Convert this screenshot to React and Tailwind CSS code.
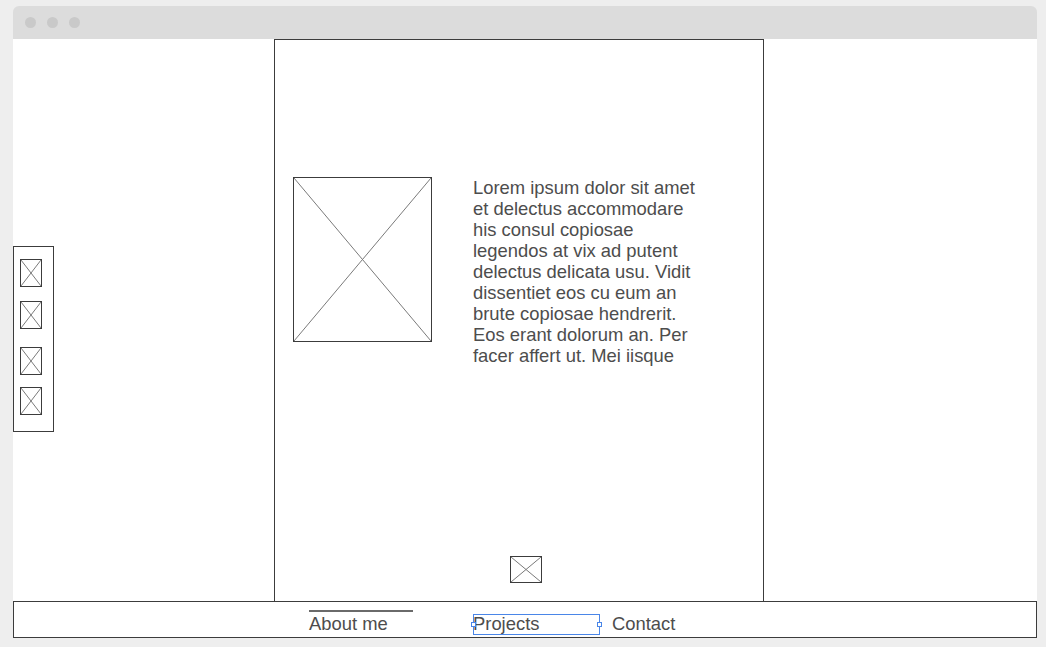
function Placeholder({ className }) {
  return (
    <div className={`border border-[#3c3c3c] bg-white ${className}`}>
      <svg className="block w-full h-full" viewBox="0 0 100 100" preserveAspectRatio="none">
        <line x1="0" y1="0" x2="100" y2="100" stroke="#7a7a7a" strokeWidth="1" vectorEffect="non-scaling-stroke" />
        <line x1="100" y1="0" x2="0" y2="100" stroke="#7a7a7a" strokeWidth="1" vectorEffect="non-scaling-stroke" />
      </svg>
    </div>
  );
}

export default function App() {
  return (
    <div
      className="w-[1046px] h-[647px] bg-[#eeeeee] pt-[6px] pl-[13px] overflow-hidden text-[#4d4d4d]"
      style={{ fontFamily: '"Liberation Sans", Arial, sans-serif' }}
    >
      <div className="w-[1024px] flex flex-col">
        {/* Title bar */}
        <div className="h-[33px] bg-[#dcdcdc] rounded-t-[6px] flex items-center gap-[11px] pl-[12px]">
          <span className="w-[11px] h-[11px] rounded-full bg-[#c9c9c9]" />
          <span className="w-[11px] h-[11px] rounded-full bg-[#c9c9c9]" />
          <span className="w-[11px] h-[11px] rounded-full bg-[#c9c9c9]" />
        </div>

        {/* Content */}
        <div className="h-[562px] bg-white flex items-start">
          {/* Sidebar */}
          <div className="mt-[207px] w-[41px] h-[186px] border border-[#3c3c3c] flex flex-col pl-[6px]">
            <Placeholder className="w-[22px] h-[28px] mt-[12px]" />
            <Placeholder className="w-[22px] h-[28px] mt-[14px]" />
            <Placeholder className="w-[22px] h-[28px] mt-[18px]" />
            <Placeholder className="w-[22px] h-[28px] mt-[12px]" />
          </div>

          {/* Center column */}
          <div className="ml-[220px] w-[490px] h-[562px] border-t border-l border-r border-[#3c3c3c] flex flex-col">
            <div className="flex items-start">
              <Placeholder className="ml-[18px] mt-[137px] w-[139px] h-[165px] shrink-0" />
              <p className="ml-[41px] mt-[137px] w-[236px] text-[18.4px] leading-[21px]">
                Lorem ipsum dolor sit amet et delectus accommodare his consul copiosae legendos at vix ad putent
                delectus delicata usu. Vidit dissentiet eos cu eum an brute copiosae hendrerit. Eos erant dolorum
                an. Per facer affert ut. Mei iisque
              </p>
            </div>
            <Placeholder className="mt-auto mb-[18px] ml-[235px] w-[32px] h-[27px]" />
          </div>
        </div>

        {/* Bottom nav */}
        <div className="h-[37px] bg-white border border-[#3c3c3c] flex items-start text-[18.4px] leading-[21px]">
          <div className="ml-[295px] pt-[8px] flex flex-col">
            <div className="w-[104px] h-[2px] bg-[#6a6a6a]" />
            <span className="mt-[1px]">About me</span>
          </div>
          <div className="ml-[60px] pt-[11px]">
            <span className="relative block w-[127px]">
              Projects
              <span className="absolute left-0 top-[1px] w-[127px] h-[21px] border border-[#4a86e8]" />
              <span className="absolute left-[-2px] top-[9px] w-[5px] h-[5px] border border-[#4a86e8] bg-white" />
              <span className="absolute right-[-2px] top-[9px] w-[5px] h-[5px] border border-[#4a86e8] bg-white" />
            </span>
          </div>
          <div className="ml-[12px] pt-[11px]">
            <span>Contact</span>
          </div>
        </div>
      </div>
    </div>
  );
}
